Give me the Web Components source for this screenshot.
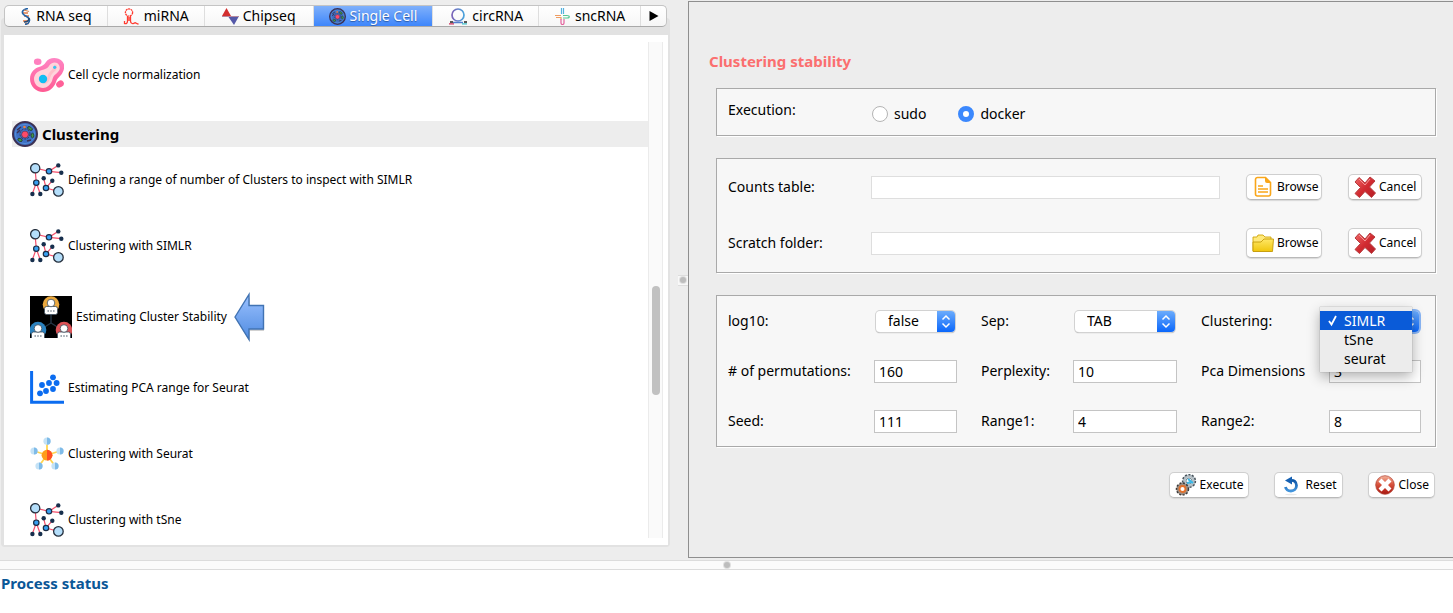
<!DOCTYPE html>
<html lang="en">
<head>
<meta charset="utf-8">
<title>Clustering stability</title>
<style>
  html, body { margin: 0; height: 100%; }
  body { font-family: "Noto Sans", sans-serif; font-size: 14px; line-height: 18px; color: #000; background: #ededed; }
</style>
</head>
<body>
<rna-app></rna-app>

<script>
const ICONS = {
  dna: ['0 0 10 17', `<g fill="none" stroke-width="1.600"><path d="M2 5h5M3 8h5M2 13h5M4 15.500h4" stroke="#e07a45" stroke-width="1.300"/><path d="M7 .5C2 1 0 4 2.500 6.500S9 9 8.500 12.500 6 16 4 16.500" stroke="#2464a8"/><path d="M3 2l5 1.500" stroke="#d9885a" stroke-width="1.200"/><path d="M8 10c0 3-2 4-5 4" stroke="#27486e"/></g>`],
  hairpin: ['0 0 16 17', `<g fill="none" stroke="#ff3b30" stroke-width="1.300"><circle cx="5.500" cy="4.500" r="3.600" stroke-dasharray="2 .6"/><path d="M4 8v5c0 2-1 3-3 2.500M7 8v5c0 3 3 3 4 2s2 1 4 1M4 10h3M4 12h3M1 13v3"/></g>`],
  peaks: ['0 0 17 17', `<path d="M0 8L4.500 0 9 8z" fill="#d32f2f"/><path d="M6.500 9h10L12 17z" fill="#5458a8"/><path d="M0 8.500h17" stroke="#b58aa0" stroke-width="1"/>`],
  cell: ['0 0 26 26', `<circle cx="13" cy="13" r="12" fill="#3d70c4" stroke="#3c3153" stroke-width="2"/><circle cx="13" cy="13" r="9.600" fill="none" stroke="#5a94dd" stroke-width=".8"/><circle cx="13" cy="13" r="5" fill="none" stroke="#3c3153" stroke-width="1" stroke-dasharray="2 1.200"/><circle cx="13" cy="13.500" r="3.400" fill="#ff4a68" stroke="#3c3153" stroke-width=".6"/><g fill="#3f9a45" stroke="#28382e" stroke-width=".8"><ellipse cx="18" cy="7.500" rx="2.600" ry="1.500" transform="rotate(35 18 7.500)"/><ellipse cx="20.500" cy="14.500" rx="1.400" ry="2.300"/><ellipse cx="8" cy="19" rx="2.300" ry="1.500" transform="rotate(25 8 19)"/></g><circle cx="12.500" cy="6" r="1.300" fill="#f0803c"/><path d="M5 9l4-3M5 12l3-3M15 20l4-1" stroke="#3c3153" stroke-width="1.500"/>`],
  ring: ['0 0 20 17', `<defs><linearGradient id="a"><stop stop-color="#7b62b8"/><stop offset="1" stop-color="#4aa3dc"/></linearGradient></defs><circle cx="10" cy="7" r="6" fill="none" stroke="url(#a)" stroke-width="1.700"/><path d="M1 15.800h5" stroke="#d12d5a" stroke-width="1.300"/><path d="M5 14.500h10" stroke="#5480cf" stroke-width="1.300"/><path d="M14 15.800h5" stroke="#3ec1c9" stroke-width="1.300"/><path d="M2 14h3M16 14h3" stroke="#222" stroke-width="1.400"/>`],
  cross4: ['0 0 15 17', `<g fill="none" stroke-width="1.200"><path d="M6.500 0v6M8.500 0v6" stroke="#55b2e0"/><path d="M0 7.500h6M1 9.500h5v2" stroke="#ee9c62"/><path d="M8 7.500h4c3 0 3 2.500 0 2.500H8" stroke="#56c794"/><path d="M6 11v4c0 2 3 2 3 0v-4" stroke="#e4609c"/></g>`],
  cycle: ['0 0 34 34', `<defs><linearGradient id="b" x2="0" y2="1"><stop stop-color="#ff85c4"/><stop offset="1" stop-color="#ff5a92"/></linearGradient></defs><path d="M16 4C19-1 28-1 32 3s2 10-1 14c-3 3-4 4-5 7-2 6-7 10-13 10C6 34 0 28 0 21S5 10 9 9c3-1 5-2 7-5z" fill="url(#b)"/><path d="M19 8c2-4 8-5 10-1s0 6-3 9c-3 2-3 4-4 7-2 4-5 7-9 7-5 0-9-4-9-9s4-8 8-9c3-1 5-1 7-4z" fill="#ffd5dc"/><path d="M24 7c3-1 4 2 2 5-2 2-5 4-6 8s-3 6-7 6c3-2 4-5 5-9s6-5 6-10z" fill="#ffc0ca"/><circle cx="13" cy="21" r="4.200" fill="#12bdf2"/><circle cx="24.700" cy="9.300" r="1.600" fill="#35c3f3"/><ellipse cx="7.700" cy="3.700" rx="3.800" ry="3.200" fill="#ff80bf"/><ellipse cx="30" cy="26" rx="4" ry="3.300" fill="#ff6098" transform="rotate(-30 30 26)"/>`],
  network: ['0 0 34 34', `<path d="M5 5l14 3.300 9.300-6M19 8.300l12.300 1.400M5 5l1.300 14.700L2.300 31M6.300 19.700l4 11.300M13.700 15.300L16 25l6.300-7.300M16 25l12.300 3.300" fill="none" stroke="#f4506c" stroke-width="1.200"/><g fill="#b4defa" stroke="#252f3d" stroke-width="1.300"><circle cx="5.200" cy="5.200" r="4.600"/><circle cx="28.400" cy="28.400" r="4.800"/></g><g fill="#3aa0f0" stroke="#1c2c44" stroke-width="1.200"><circle cx="19" cy="8.300" r="2.700"/><circle cx="6.300" cy="19.700" r="2.700"/><circle cx="16" cy="25" r="2.700"/></g><g fill="#172f4d"><circle cx="28.300" cy="2.400" r="2.200"/><circle cx="31.300" cy="9.700" r="2.200"/><circle cx="2.400" cy="31" r="2.200"/><circle cx="10.300" cy="31" r="2.200"/><circle cx="13.700" cy="15.300" r="2.200"/><circle cx="22.300" cy="17.700" r="2.200"/></g>`],
  people: ['0 0 42 42', `<path d="M0 0h42v42H0z" fill="#000"/><path d="M21 18v9M21 27l-8 5M21 27l8 5" stroke="#243645" stroke-width="1.400"/><circle cx="21" cy="8.500" r="8.300" fill="#eba93f"/><circle cx="8" cy="34" r="8.300" fill="#2b83c0"/><circle cx="34" cy="34" r="8.300" fill="#dc5357"/><g fill="#fff" stroke="#3c4c5c" stroke-width=".8"><rect x="14.500" y="10.500" width="13" height="8" rx="2"/><rect x="1.500" y="36" width="13" height="8" rx="2"/><rect x="27.500" y="36" width="13" height="8" rx="2"/><circle cx="21" cy="7" r="3.800"/><circle cx="8" cy="32.500" r="3.800"/><circle cx="34" cy="32.500" r="3.800"/></g><g stroke="#76828e" stroke-width="1.400" stroke-dasharray="1.400 1.400"><path d="M17.500 15h8M4.500 40h8M30.500 40h8"/></g>`],
  scatter: ['0 0 34 34', `<path d="M1.600 0v31.200H34" fill="none" stroke="#0b6cf0" stroke-width="3"/><g fill="#0b6cf0"><circle cx="10" cy="22.300" r="2.900"/><circle cx="16" cy="20" r="2.900"/><circle cx="23" cy="18" r="2.900"/><circle cx="12" cy="14" r="2.900"/><circle cx="19" cy="12" r="2.900"/><circle cx="26.600" cy="12" r="2.900"/><circle cx="23" cy="6.300" r="2.900"/></g>`],
  star: ['0 0 34 34', `<path d="M17 18V5M17 18L4 14M17 18l13-4M17 18L9 29M17 18l8 11" stroke="#ffd54f" stroke-width="1.800"/><g fill="#c4e2f6"><circle cx="17" cy="4.200" r="3.600"/><circle cx="4" cy="14" r="3.600"/><circle cx="30" cy="14" r="3.600"/><circle cx="9" cy="29" r="3.600"/><circle cx="25" cy="29" r="3.600"/></g><path d="M17 .6a3.600 3.600 0 010 7.200zM4 10.400a3.600 3.600 0 010 7.200zM30 10.400a3.600 3.600 0 010 7.200zM9 25.400a3.600 3.600 0 010 7.200zM25 25.400a3.600 3.600 0 010 7.200z" fill="#7fbbe8"/><circle cx="17" cy="18.200" r="5.400" fill="#ff9d1b"/><path d="M17 12.800a5.400 5.400 0 010 10.800z" fill="#ff5023"/>`],
  arrow: ['0 0 32 50', `<defs><linearGradient id="c" x2="0" y2="1"><stop stop-color="#9bc1ff"/><stop offset="1" stop-color="#4f8be0"/></linearGradient></defs><path d="M2 27L16 5v11h14v23H16v11z" fill="#000" opacity=".18"/><path d="M1 25L15 2.500V13.500H29.500V37H15V47.500z" fill="url(#c)" stroke="#4173b3" stroke-width="1.400"/>`],
  doc: ['0 0 22 22', `<path d="M5.500 1.500h8l5 5v11.500a2 2 0 01-2 2H5.500a2 2 0 01-2-2V3.500a2 2 0 012-2z" fill="#fff" stroke="#f9a61a" stroke-width="1.600"/><path d="M13 1l6 6h-4a2 2 0 01-2-2z" fill="#f9a61a"/><path d="M6 10h5M6 13h10M6 16h10" stroke="#f9a61a" stroke-width="1.300"/>`],
  folder: ['0 0 22 22', `<defs><linearGradient id="d" x2="0" y2="1"><stop stop-color="#ffe766"/><stop offset="1" stop-color="#f0c60c"/></linearGradient></defs><path d="M1 19V5h4l1-2h5l2 2h6v14z" fill="#ffe97a" stroke="#cfa50b" stroke-width=".9"/><path d="M1 19.500V10h8l3-3h9.500l-1 12.500z" fill="url(#d)" stroke="#c49a08" stroke-width=".9"/>`],
  cancel: ['0 0 22 22', `<defs><linearGradient id="e" x2="1" y2="1"><stop stop-color="#f06a6a"/><stop offset=".5" stop-color="#d22c32"/><stop offset="1" stop-color="#b51d24"/></linearGradient></defs><path d="M5 1.500l6 5.500 5-6 5 4-5.500 6 6 6-4 4.500-6.500-6-5.500 6L1 17.500l5.500-6L1 6z" fill="url(#e)" stroke="#b63b3e" stroke-width="1" stroke-linejoin="round"/><path d="M5 3l6 6 5-6" fill="none" stroke="#f7a0a0" stroke-width=".9"/>`],
  gears: ['0 0 22 22', `<g fill="none"><circle cx="14" cy="7" r="5" stroke="#b3bec5" stroke-width="3.200"/><circle cx="14" cy="7" r="6.400" stroke="#47525a" stroke-width="1.500" stroke-dasharray="2 1.600"/><circle cx="14" cy="7" r="3" stroke="#65737c" stroke-width=".8"/><path d="M12 9l5-1M13 5l5 4" stroke="#39b8e8" stroke-width="2"/><circle cx="7.500" cy="15" r="4.600" stroke="#9c8e84" stroke-width="3"/><circle cx="7.500" cy="15" r="6" stroke="#3a3a3a" stroke-width="1.500" stroke-dasharray="2 1.500"/><circle cx="7.500" cy="15" r="3" stroke="#e3702a" stroke-width="1.900"/></g>`],
  reset: ['0 0 22 22', `<defs><linearGradient id="f" x2="0" y2="1"><stop stop-color="#0e57a8"/><stop offset="1" stop-color="#4294dc"/></linearGradient></defs><ellipse cx="11" cy="20.500" rx="6" ry=".8" fill="#e9e9e9"/><path d="M10 6.500c4-.8 6.500 1.500 6.500 5s-2.500 5.500-5.500 5.500-5-1.500-5.500-4" fill="none" stroke="url(#f)" stroke-width="2.800"/><path d="M12 2.500v8L5 6.500z" fill="#1560b2"/>`],
  close: ['0 0 22 22', `<defs><linearGradient id="g" x2="0" y2="1"><stop stop-color="#f5b59c"/><stop offset=".45" stop-color="#d9553f"/><stop offset="1" stop-color="#a8150f"/></linearGradient></defs><circle cx="11" cy="11" r="9.300" fill="url(#g)" stroke="#b5493a" stroke-width=".8"/><path d="M7.500 4.500l3.500 3.500 3.500-3.500 3 3L14 11l3.500 3.500-3 3L11 14l-3.500 3.500-3-3L8 11 4.500 7.500z" fill="#fff"/>`],
  play: ['0 0 10 10', `<path d="M.5 0L9.500 5 .5 10z" fill="#000"/>`],
  updown: ['0 0 18 21', `<path d="M5.500 8.500L9 5l3.500 3.500M5.500 12.500L9 16l3.500-3.500" fill="none" stroke="#fff" stroke-width="1.500"/>`]
};

const define = (name, html, setup) => {
  const template = document.createElement('template');
  template.innerHTML = html;
  customElements.define(name, class extends HTMLElement {
    constructor() {
      super();
      this.attachShadow({ mode: 'open' }).append(template.content.cloneNode(true));
    }
    connectedCallback() {
      if (setup && !this.ready) { this.ready = true; setup(this, this.shadowRoot); }
    }
  });
};

define('ui-icon', `
  <style>
    :host { display: block; flex: none; width: var(--w, 22px); height: var(--h, 22px); }
    svg { display: block; width: 100%; height: 100%; }
  </style>`, (host, root) => {
  const [box, art] = ICONS[host.getAttribute('name')];
  root.innerHTML += `<svg viewBox="${box}" aria-hidden="true">${art}</svg>`;
});

define('tab-item', `
  <style>
    :host { display: flex; min-width: 0; border-right: 1px solid #dedede; }
    :host(:last-of-type) { border-right: 0; }
    button { flex: 1; display: flex; align-items: center; justify-content: center; gap: 4px; min-width: 0; padding: 0; border: 0; background: transparent; font: inherit; color: #000; white-space: nowrap; }
    :host([selected]) button { background: linear-gradient(#7fb0fb, #3e86fb); color: #fff; text-shadow: 0 1px 1px #2b5aa8; }
  </style>
  <button type="button" role="tab"><slot name="icon"></slot><slot></slot></button>`);

define('tab-bar', `
  <style>
    :host { display: grid; grid-template-columns: 103fr 97fr 109fr 120fr 106fr 102fr 25fr; height: 20px; border: 1px solid #c4c4c4; border-bottom-color: #a9a9a9; border-radius: 5px; background: linear-gradient(#fff, #f6f6f6); overflow: hidden; }
  </style>
  <slot></slot>`);

define('tool-item', `
  <style>
    :host { display: flex; align-items: center; gap: 4px; height: 66px; padding-left: 18px; font-size: 12px; --w: 34px; --h: 34px; }
    :host([large]) { height: 76px; --w: 42px; --h: 42px; }
    a { color: #000; text-decoration: none; white-space: nowrap; }
  </style>
  <slot name="icon"></slot><a href="#"><slot></slot></a><slot name="after"></slot>`);

define('section-title', `
  <style>
    :host { display: flex; align-items: center; gap: 4px; height: 26px; margin-top: 13px; background: #ededed; --w: 26px; --h: 26px; }
    h2 { margin: 0; font-size: 15px; line-height: 20px; font-weight: 700; color: #000; }
  </style>
  <slot name="icon"></slot><h2><slot></slot></h2>`);

define('tool-browser', `
  <style>
    :host { display: flex; flex-direction: column; padding: 18px 8px 13px 1px; }
    .frame { flex: 1; display: flex; flex-direction: column; border: solid #e2e2e2; border-width: 0 2px 2px 3px; border-radius: 4px; background: #e2e2e2; }
    tab-bar { margin: -13px 1px 8px 0; }
    .page { flex: 1; display: flex; padding: 7px 5px 7px 8px; background: #fff; }
    .view { flex: 1; height: 0; min-height: 100%; overflow: hidden; }
    .track { display: grid; grid-template-rows: 244fr 108fr 143fr; width: 13px; border: solid #ebebeb; border-width: 0 1px; background: #fafafa; justify-items: center; }
    .thumb { grid-row: 2; width: 8px; border-radius: 4px; background: #c1c1c1; }
    .small { --w: 17px; --h: 17px; }
  </style>
  <div class="frame">
    <tab-bar role="tablist">
      <tab-item><ui-icon slot="icon" name="dna" style="--w:12px;--h:17px"></ui-icon>RNA seq</tab-item>
      <tab-item><ui-icon slot="icon" name="hairpin" class="small"></ui-icon>miRNA</tab-item>
      <tab-item><ui-icon slot="icon" name="peaks" class="small"></ui-icon>Chipseq</tab-item>
      <tab-item selected><ui-icon slot="icon" name="cell" class="small"></ui-icon>Single Cell</tab-item>
      <tab-item><ui-icon slot="icon" name="ring" style="--w:20px;--h:17px"></ui-icon>circRNA</tab-item>
      <tab-item><ui-icon slot="icon" name="cross4" class="small"></ui-icon>sncRNA</tab-item>
      <tab-item aria-label="More tabs"><ui-icon slot="icon" name="play" style="--w:10px;--h:10px"></ui-icon></tab-item>
    </tab-bar>
    <div class="page">
      <div class="view">
        <tool-item><ui-icon slot="icon" name="cycle"></ui-icon>Cell cycle normalization</tool-item>
        <section-title><ui-icon slot="icon" name="cell"></ui-icon>Clustering</section-title>
        <tool-item><ui-icon slot="icon" name="network"></ui-icon>Defining a range of number of Clusters to inspect with SIMLR</tool-item>
        <tool-item><ui-icon slot="icon" name="network"></ui-icon>Clustering with SIMLR</tool-item>
        <tool-item large><ui-icon slot="icon" name="people"></ui-icon>Estimating Cluster Stability<ui-icon slot="after" name="arrow" style="--w:32px;--h:50px;margin-left:3px"></ui-icon></tool-item>
        <tool-item><ui-icon slot="icon" name="scatter"></ui-icon>Estimating PCA range for Seurat</tool-item>
        <tool-item><ui-icon slot="icon" name="star"></ui-icon>Clustering with Seurat</tool-item>
        <tool-item><ui-icon slot="icon" name="network"></ui-icon>Clustering with tSne</tool-item>
      </div>
      <div class="track"><div class="thumb"></div></div>
    </div>
  </div>`);

define('form-group', `
  <style>
    :host { display: grid; align-items: center; margin: 0 17px 22px 27px; padding: 0 14px 0 11px; border: 1px solid #a9a9a9; background: #f7f7f7; box-shadow: 1px 1px 0 #fff; }
  </style>
  <slot></slot>`);

define('push-button', `
  <style>
    :host { display: flex; min-width: 0; }
    button { flex: 1; display: flex; align-items: center; gap: 3px; height: 26px; padding: 0 5px; border: 1px solid #cfcfcf; border-bottom-color: #b9b9b9; border-radius: 5px; background: #fff; box-shadow: 0 1px 1px #d8d8d8; font: inherit; font-size: 12px; color: #000; white-space: nowrap; }
    :host([fixed]) button { min-width: 0; padding: 0 0 0 5px; }
    :host([tall]) button { height: 30px; }
  </style>
  <button type="button"><slot name="icon"></slot><slot></slot></button>`);

define('radio-option', `
  <style>
    :host { display: block; }
    label { display: flex; align-items: center; gap: 6px; }
    input { appearance: none; box-sizing: border-box; width: 16px; height: 16px; margin: 0; border: 1px solid #b4b4b4; border-radius: 50%; background: #fff; }
    input:checked { border: 5px solid #3b88fd; }
  </style>
  <label><input type="radio"><slot></slot></label>`, (host, root) => {
  root.querySelector('input').checked = host.hasAttribute('checked');
});

define('text-field', `
  <style>
    :host { display: contents; }
    label { white-space: nowrap; }
    input { box-sizing: border-box; width: 100%; min-width: 0; height: 23px; margin: 0; padding: 0 4px; border: 1px solid #c4c4c4; border-radius: 0; background: #fff; font: inherit; color: #000; outline: 0; }
    :host([pale]) input { border-color: #dedede; }
  </style>
  <label for="field"><slot></slot></label><input id="field" type="text">`, (host, root) => {
  root.querySelector('input').value = host.getAttribute('value') || '';
});

define('select-field', `
  <style>
    :host { display: contents; }
    label { white-space: nowrap; }
    .box { position: relative; display: grid; grid-template-columns: 1fr 18px; height: 21px; margin: 0 2px; border-radius: 4px; background: #fff; box-shadow: 0 0 0 1px #d2d2d2, 0 1px 1px #999; }
    select { grid-area: 1 / 1 / 2 / 3; appearance: none; width: 100%; min-width: 0; margin: 0; padding: 0 22px 0 12px; border: 0; background: transparent; font: inherit; color: #000; outline: 0; }
    ui-icon { grid-area: 1 / 2; --w: 18px; --h: 21px; border-radius: 0 4px 4px 0; background: linear-gradient(#6cacfc, #0a67fb); pointer-events: none; }
    :host([open]) .box { box-shadow: 0 0 0 2px #8ab6f5; }
    ul { display: none; }
    :host([open]) ul { display: block; position: absolute; left: -11px; right: 7px; top: -4px; z-index: 2; margin: 0; padding: 4px 0; list-style: none; background: #ececec; box-shadow: 0 0 1px #888, 0 5px 12px rgba(0,0,0,.3); }
    li { display: grid; grid-template-columns: 16px 1fr; padding-left: 8px; line-height: 19px; }
    li.on { background: #0a5bd8; color: #fff; }
    li span { grid-column: 2; }
    li svg { display: none; width: 9px; height: 18px; }
    li.on svg { display: block; }
  </style>
  <label for="field"><slot></slot></label>
  <div class="box"><select id="field"></select><ui-icon name="updown"></ui-icon><ul role="listbox"></ul></div>`, (host, root) => {
  const options = host.getAttribute('options').split(' ');
  root.querySelector('select').innerHTML = options.map(o => `<option>${o}</option>`).join('');
  if (host.hasAttribute('open')) root.querySelector('ul').innerHTML = options.map((o, i) =>
    `<li role="option" class="${i ? '' : 'on'}"><svg viewBox="0 0 9 18"><path d="M1 10l2.500 3.500L8 5" fill="none" stroke="#fff" stroke-width="1.800"/></svg><span>${o}</span></li>`).join('');
});

define('stability-form', `
  <style>
    :host { display: block; box-sizing: border-box; margin: 1px 0 2px; border: solid #8f8f8f; border-width: 1px 0 1px 1px; }
    h1 { margin: 49px 0 17px 20px; font-size: 15px; line-height: 20px; font-weight: 700; color: #fb6f6f; }
    .exec { grid-template-columns: 144px auto auto 1fr; height: 46px; }
    .exec radio-option { padding-top: 4px; margin-right: 32px; }
    .exec span { padding-bottom: 4px; }
    .files { grid-template-columns: 117px 1fr 76px 74px; column-gap: 26px; grid-auto-rows: 56px; padding-right: 13px; padding-bottom: 1px; }
    .params { grid-template-columns: 122px 83fr 68px 104fr 104px 92fr; column-gap: 24px; grid-auto-rows: 50px; }
    footer { display: flex; justify-content: flex-end; gap: 25px; margin: 25px 18px 0; }
  </style>
  <h1>Clustering stability</h1>
  <form-group class="exec" role="radiogroup" aria-label="Execution">
    <span>Execution:</span><radio-option>sudo</radio-option><radio-option checked>docker</radio-option>
  </form-group>
  <form-group class="files">
    <text-field pale>Counts table:</text-field>
    <push-button fixed><ui-icon slot="icon" name="doc"></ui-icon>Browse</push-button>
    <push-button fixed><ui-icon slot="icon" name="cancel"></ui-icon>Cancel</push-button>
    <text-field pale>Scratch folder:</text-field>
    <push-button fixed tall><ui-icon slot="icon" name="folder"></ui-icon>Browse</push-button>
    <push-button fixed tall><ui-icon slot="icon" name="cancel"></ui-icon>Cancel</push-button>
  </form-group>
  <form-group class="params">
    <select-field options="false true">log10:</select-field>
    <select-field options="TAB comma">Sep:</select-field>
    <select-field open options="SIMLR tSne seurat">Clustering:</select-field>
    <text-field value="160"># of permutations:</text-field>
    <text-field value="10">Perplexity:</text-field>
    <text-field value="3">Pca Dimensions</text-field>
    <text-field value="111">Seed:</text-field>
    <text-field value="4">Range1:</text-field>
    <text-field value="8">Range2:</text-field>
  </form-group>
  <footer>
    <push-button><ui-icon slot="icon" name="gears"></ui-icon>Execute</push-button>
    <push-button><ui-icon slot="icon" name="reset"></ui-icon>Reset</push-button>
    <push-button><ui-icon slot="icon" name="close"></ui-icon>Close</push-button>
  </footer>`);

define('split-handle', `
  <style>
    :host { display: flex; align-items: center; justify-content: center; }
    :host([across]) { border: solid #dcdcdc; border-width: 1px 0; background: #fbfbfb; height: 8px; }
    span { display: flex; align-items: center; justify-content: center; }
    i { width: 6px; height: 6px; border-radius: 50%; background: #bdbdbd; box-shadow: 0 0 0 1px #e0e0e0; }
    :host(:not([across])) span { width: 10px; height: 9px; background: #f8f8f8; border: solid #ddd; border-width: 1px 0; }
  </style>
  <span><i></i></span>`);

define('rna-app', `
  <style>
    :host { display: flex; flex-direction: column; min-height: 100vh; background: #ededed; }
    main { flex: 1; display: grid; grid-template-columns: 678fr 10px 765fr; }
    footer { min-height: 43px; background: #fff; }
    h2 { margin: 0; padding: 3px 1px; font-size: 15px; line-height: 20px; font-weight: 700; color: #0a5797; }
  </style>
  <main>
    <tool-browser></tool-browser>
    <split-handle></split-handle>
    <stability-form></stability-form>
  </main>
  <split-handle across></split-handle>
  <footer><h2>Process status</h2></footer>`);
</script>
</body>
</html>
